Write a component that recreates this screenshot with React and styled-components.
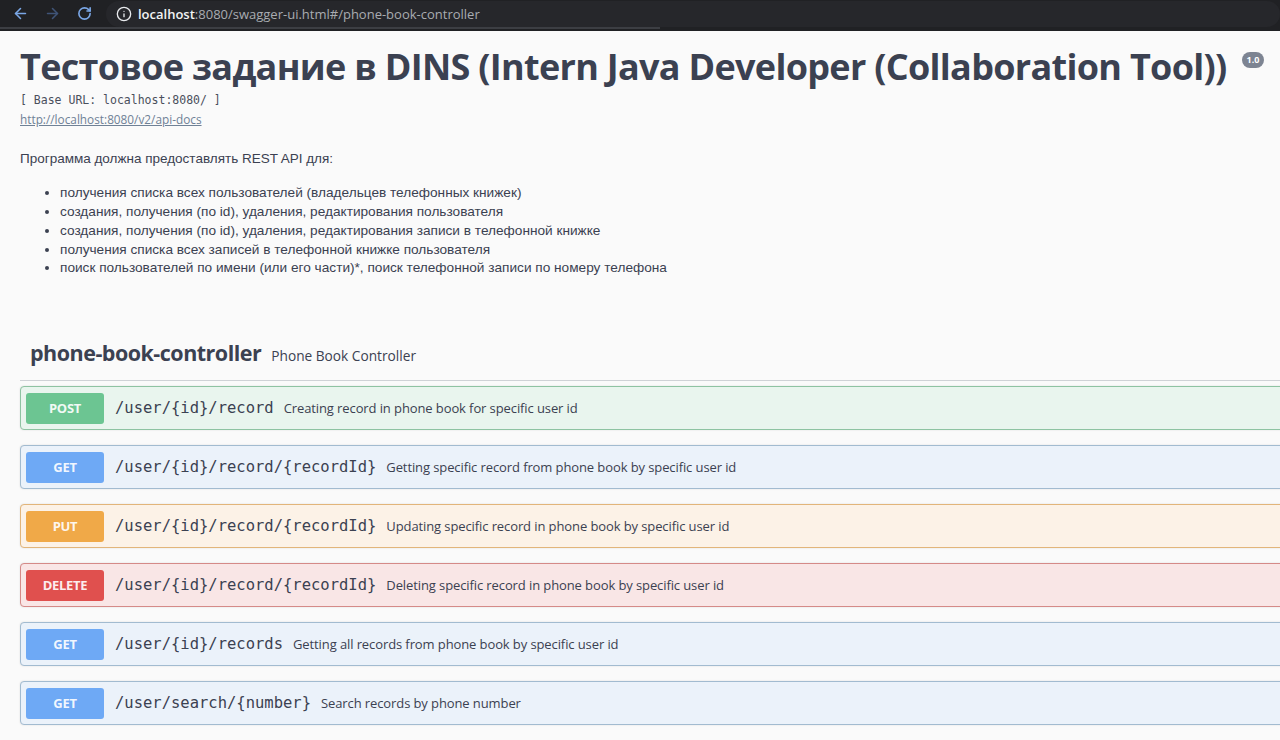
import styled, { createGlobalStyle } from "styled-components";
import { ArrowLeft, ArrowRight, RotateCw, Info } from "lucide-react";

const GlobalStyle = createGlobalStyle`
  html, body {
    margin: 0;
    padding: 0;
    background: #fafafa;
    overflow: hidden;
  }
`;

const Screen = styled.div`
  width: 1280px;
  height: 740px;
  overflow: hidden;
  background: #fafafa;
`;

const Chrome = styled.div`
  height: 31px;
  background: #202124;
  display: flex;
  align-items: center;
  padding-left: 4px;
  box-sizing: border-box;
  position: relative;
`;

const NavButton = styled.div`
  width: 32px;
  display: flex;
  align-items: center;
  justify-content: center;
  margin-top: -4px;
  color: ${p => (p.$dim ? "#3f5477" : "#7aa7e6")};
`;

const Omnibox = styled.div`
  margin-left: 6px;
  flex: 1;
  height: 26px;
  margin-top: -4px;
  border-radius: 13px;
  background: #26272b;
  display: flex;
  align-items: center;
  padding-left: 10px;
  gap: 6px;
  color: #e8eaed;
  font-family: "Open Sans", sans-serif;
  font-size: 13px;
`;

const Host = styled.span`
  color: #f1f3f4;
  font-weight: 600;
`;

const Rest = styled.span`
  color: #a9acb1;
`;

const LoadBar = styled.div`
  position: absolute;
  left: 0;
  bottom: 2px;
  width: 660px;
  height: 2px;
  background: #3c3e43;
`;

const Page = styled.div`
  padding: 12px 0 0 20px;
  color: #3b4151;
`;

const TitleRow = styled.div`
  display: flex;
  align-items: flex-start;
`;

const Title = styled.h1`
  margin: 0;
  font-family: "Open Sans", sans-serif;
  font-weight: 700;
  font-size: 36px;
  line-height: 48px;
  letter-spacing: -0.7px;
  color: #3b4151;
`;

const Version = styled.span`
  margin-left: 15px;
  margin-top: 9px;
  background: #7d8492;
  color: #fff;
  border-radius: 8px;
  padding: 1px 5px;
  font-family: "Open Sans", sans-serif;
  font-weight: 700;
  font-size: 9px;
  line-height: 14px;
`;

const BaseUrl = styled.div`
  font-family: "DejaVu Sans Mono", monospace;
  font-size: 11.5px;
  line-height: 18px;
  color: #4a4f5c;
`;

const DocLink = styled.a`
  display: block;
  font-family: "Open Sans", sans-serif;
  font-size: 11.8px;
  line-height: 20px;
  color: #6f8196;
  text-decoration: underline;
`;

const Desc = styled.div`
  font-family: "Liberation Sans", Arial, sans-serif;
  font-size: 13.5px;
  color: #3b4151;
  margin-top: 21px;
  line-height: 18.75px;

  p {
    margin: 0 0 15.5px;
  }

  ul {
    margin: 0;
    padding-left: 40px;
    font-size: 13.65px;
  }
`;

const Section = styled.div`
  margin-top: 60px;
`;

const TagHeader = styled.div`
  display: flex;
  align-items: baseline;
  gap: 10px;
  padding: 0 0 13px 10px;
  border-bottom: 1px solid #cfd2d6;
  margin-right: -10px;
`;

const TagName = styled.span`
  font-family: "Open Sans", sans-serif;
  font-weight: 700;
  font-size: 21.5px;
  letter-spacing: -0.5px;
  color: #3b4151;
`;

const TagDesc = styled.span`
  font-family: "Open Sans", sans-serif;
  font-size: 13.7px;
  color: #3b4151;
`;

const Ops = styled.div`
  display: flex;
  flex-direction: column;
  gap: 15px;
  margin-top: 5px;
  margin-right: -10px;
`;

const methods = {
  POST: { badge: "#6cc592", bg: "#e9f5ee", border: "#8ec3a2" },
  GET: { badge: "#6ea9f5", bg: "#ebf2fa", border: "#a2bbd0" },
  PUT: { badge: "#f0a948", bg: "#fcf2e7", border: "#e2b57a" },
  DELETE: { badge: "#e0504e", bg: "#f9e6e6", border: "#d58a88" },
};

const OpBlock = styled.div`
  height: 44px;
  box-sizing: border-box;
  display: flex;
  align-items: center;
  padding: 0 5px;
  border: 1px solid ${p => methods[p.$method].border};
  background: ${p => methods[p.$method].bg};
  border-radius: 4px;
  box-shadow: 0 0 2px rgba(0, 0, 0, 0.12);
`;

const Method = styled.span`
  width: 78px;
  height: 31px;
  border-radius: 3px;
  background: ${p => methods[p.$method].badge};
  color: rgba(255, 255, 255, 0.92);
  display: flex;
  align-items: center;
  justify-content: center;
  font-family: "Open Sans", sans-serif;
  font-weight: 700;
  font-size: 13px;
  letter-spacing: -0.3px;
`;

const Path = styled.span`
  margin-left: 11px;
  font-family: "DejaVu Sans Mono", monospace;
  font-size: 15.5px;
  color: #3b4151;
`;

const Summary = styled.span`
  margin-left: 10px;
  font-family: "Open Sans", sans-serif;
  font-size: 13px;
  letter-spacing: -0.1px;
  color: #3b4151;
`;

const items = [
  "получения списка всех пользователей (владельцев телефонных книжек)",
  "создания, получения (по id), удаления, редактирования пользователя",
  "создания, получения (по id), удаления, редактирования записи в телефонной книжке",
  "получения списка всех записей в телефонной книжке пользователя",
  "поиск пользователей по имени (или его части)*, поиск телефонной записи по номеру телефона",
];

const operations = [
  { method: "POST", path: "/user/{id}/record", summary: "Creating record in phone book for specific user id" },
  { method: "GET", path: "/user/{id}/record/{recordId}", summary: "Getting specific record from phone book by specific user id" },
  { method: "PUT", path: "/user/{id}/record/{recordId}", summary: "Updating specific record in phone book by specific user id" },
  { method: "DELETE", path: "/user/{id}/record/{recordId}", summary: "Deleting specific record in phone book by specific user id" },
  { method: "GET", path: "/user/{id}/records", summary: "Getting all records from phone book by specific user id" },
  { method: "GET", path: "/user/search/{number}", summary: "Search records by phone number" },
];

export default function App() {
  return (
    <Screen>
      <GlobalStyle />
      <Chrome>
        <NavButton><ArrowLeft size={17} strokeWidth={2.2} /></NavButton>
        <NavButton $dim><ArrowRight size={17} strokeWidth={2.2} /></NavButton>
        <NavButton><RotateCw size={15} strokeWidth={2.6} /></NavButton>
        <Omnibox>
          <Info size={16} color="#e8eaed" strokeWidth={2} />
          <span><Host>localhost</Host><Rest>:8080/swagger-ui.html#/phone-book-controller</Rest></span>
        </Omnibox>
        <LoadBar />
      </Chrome>
      <Page>
        <TitleRow>
          <Title>Тестовое задание в DINS (Intern Java Developer (Collaboration Tool))</Title>
          <Version>1.0</Version>
        </TitleRow>
        <BaseUrl>[ Base URL: localhost:8080/ ]</BaseUrl>
        <DocLink href="#">http://localhost:8080/v2/api-docs</DocLink>
        <Desc>
          <p>Программа должна предоставлять REST API для:</p>
          <ul>
            {items.map(t => <li key={t}>{t}</li>)}
          </ul>
        </Desc>
        <Section>
          <TagHeader>
            <TagName>phone-book-controller</TagName>
            <TagDesc>Phone Book Controller</TagDesc>
          </TagHeader>
          <Ops>
            {operations.map((op, i) => (
              <OpBlock key={i} $method={op.method}>
                <Method $method={op.method}>{op.method}</Method>
                <Path>{op.path}</Path>
                <Summary>{op.summary}</Summary>
              </OpBlock>
            ))}
          </Ops>
        </Section>
      </Page>
    </Screen>
  );
}
